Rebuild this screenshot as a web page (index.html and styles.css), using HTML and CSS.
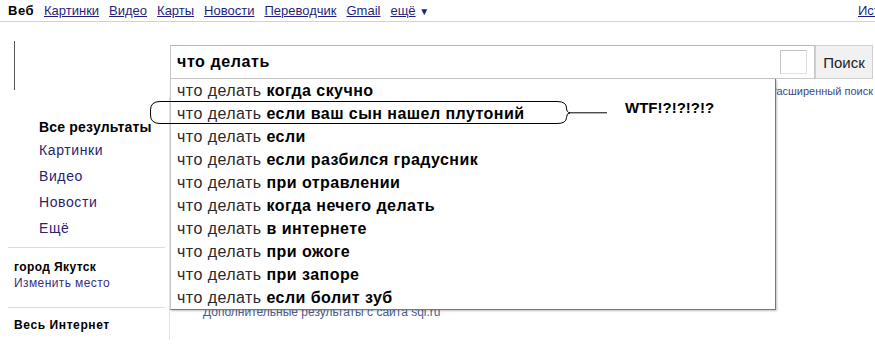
FILE: index.html
```html
<!DOCTYPE html>
<html lang="ru">
<head>
<meta charset="utf-8">
<title>что делать - Поиск</title>
<link rel="stylesheet" href="styles.css">
</head>
<body>
<div class="topbar">
  <nav class="nav-left">
    <b class="current">Веб</b>
    <a href="#">Картинки</a>
    <a href="#">Видео</a>
    <a href="#">Карты</a>
    <a href="#">Новости</a>
    <a href="#">Переводчик</a>
    <a href="#">Gmail</a>
    <span class="more"><a href="#">ещё</a> <span class="arrow">▼</span></span>
  </nav>
  <div class="nav-right"><a href="#">История поиска</a></div>
</div>

<div class="header">
  <div class="logo-line"></div>
  <div class="search">
    <div class="search-row">
      <div class="input"><span class="query">что делать</span><span class="ime"></span></div>
      <button class="btn">Поиск</button>
    </div>
    <div class="adv"><a href="#">Расширенный поиск</a></div>
    <ul class="dropdown">
      <li>что делать <b>когда скучно</b></li>
      <li>что делать <b>если ваш сын нашел плутоний</b></li>
      <li>что делать <b>если</b></li>
      <li>что делать <b>если разбился градусник</b></li>
      <li>что делать <b>при отравлении</b></li>
      <li>что делать <b>когда нечего делать</b></li>
      <li>что делать <b>в интернете</b></li>
      <li>что делать <b>при ожоге</b></li>
      <li>что делать <b>при запоре</b></li>
      <li>что делать <b>если болит зуб</b></li>
    </ul>
  </div>
</div>

<div class="main">
  <aside class="left">
    <div class="nav-title">Все результаты</div>
    <ul class="side-links">
      <li><a href="#">Картинки</a></li>
      <li><a href="#">Видео</a></li>
      <li><a href="#">Новости</a></li>
      <li><a href="#">Ещё</a></li>
    </ul>
    <div class="sep"></div>
    <div class="loc">
      <div class="loc-title">город Якутск</div>
      <a href="#" class="loc-link">Изменить место</a>
    </div>
    <div class="sep sep2"></div>
    <div class="loc-title web">Весь Интернет</div>
  </aside>
  <section class="results">
    <a href="#" class="more-res">Дополнительные результаты с сайта sql.ru</a>
  </section>
</div>

<svg class="annot" width="875" height="347" viewBox="0 0 875 347">
  <path d="M160 101.5 H557 Q566.5 101.5 566.5 108 Q566.5 112.5 570 112.8 Q566.5 113.2 566.5 117.5 Q566.5 123.5 557 123.5 H160 Q150.5 123.5 150.5 115 V110 Q150.5 101.5 160 101.5 Z" fill="none" stroke="#000" stroke-width="1"/>
  <line x1="569" y1="112.8" x2="607" y2="112.8" stroke="#000" stroke-width="1"/>
</svg>
<div class="wtf">WTF!?!?!?!?</div>
</body>
</html>
```

FILE: styles.css
```css
html, body {
  margin: 0;
  padding: 0;
  background: #fff;
  overflow: hidden;
}
body {
  font-family: "Liberation Sans", Arial, sans-serif;
  color: #000;
  width: 875px;
  height: 347px;
  position: relative;
}
a { color: #22227a; }

/* top bar */
.topbar {
  display: flex;
  height: 21px;
  line-height: 21px;
  font-size: 13px;
  border-bottom: 1px solid #cfd4dc;
  padding-left: 8px;
  white-space: nowrap;
}
.nav-left {
  display: flex;
  gap: 10px;
}
.nav-left a { color: #1f1f80; }
.current { font-weight: bold; letter-spacing: 0.5px; }
.arrow { font-size: 10px; color: #1f1f80; }
.nav-right {
  margin-left: auto;
  width: 17px;
  overflow: hidden;
}
.nav-right a { color: #1f1f80; }

/* header */
.header {
  display: flex;
  align-items: flex-start;
  padding-top: 19px;
}
.logo-line {
  margin-left: 14px;
  width: 1px;
  height: 49px;
  background: #555;
}
.search {
  position: relative;
  margin-left: 155px;
  margin-top: 4px;
  width: 703px;
}
.search-row {
  display: flex;
}
.input {
  box-sizing: border-box;
  width: 645px;
  height: 34px;
  border: 1px solid #c8c8c8;
  border-top-color: #b8b8b8;
  display: flex;
  align-items: center;
  padding-left: 6px;
}
.query {
  font-size: 16px;
  font-weight: bold;
  letter-spacing: 0.6px;
}
.ime {
  margin-left: auto;
  margin-right: 7px;
  width: 25px;
  height: 22px;
  border: 1px solid #c4c4c4;
  border-right-color: #e0e0e0;
  border-bottom-color: #e0e0e0;
}
.btn {
  box-sizing: border-box;
  width: 58px;
  height: 34px;
  border: 1px solid #cfcfcf;
  background: #f1f1f1;
  font-family: "Liberation Sans", Arial, sans-serif;
  font-size: 15px;
  color: #222;
  padding: 0;
}
.adv {
  text-align: right;
  font-size: 11px;
  line-height: 14px;
  margin-top: 5px;
}
.adv a { color: #3b4a86; text-decoration: none; }

.dropdown {
  position: absolute;
  top: 34px;
  left: 0;
  width: 604px;
  margin: 0;
  padding: 0;
  list-style: none;
  background: #fff;
  border: 1px solid #777;
  border-top: none;
  border-left-color: #c8c8c8;
  box-shadow: 1px 1px 2px rgba(0,0,0,0.25);
  z-index: 2;
}
.dropdown li {
  height: 23px;
  line-height: 23px;
  padding-left: 6px;
  font-size: 16px;
  letter-spacing: 0.45px;
  color: #2a2a2a;
  white-space: nowrap;
}
.dropdown b { color: #000; }

/* main */
.main {
  display: grid;
  grid-template-columns: 170px 1fr;
}
.left {
  box-sizing: border-box;
  border-right: 1px solid #e3e3e3;
  padding-top: 19px;
  height: 242px;
}
.nav-title {
  padding-left: 39px;
  font-size: 14px;
  font-weight: bold;
  line-height: 20px;
  letter-spacing: 0.2px;
}
.side-links {
  list-style: none;
  margin: 0;
  padding: 0 0 0 39px;
  font-size: 14px;
  line-height: 26px;
  letter-spacing: 0.6px;
}
.side-links a { color: #2a2270; text-decoration: none; }
.sep {
  margin: 6px 0 0 8px;
  width: 157px;
  border-top: 1px solid #dcdcdc;
}
.sep2 { margin-top: 16px; }
.loc {
  margin-top: 11px;
  padding-left: 14px;
  font-size: 12px;
  line-height: 16px;
}
.loc-title {
  font-size: 12px;
  font-weight: bold;
  line-height: 16px;
  letter-spacing: 0.4px;
}
.loc-link { color: #3a2f7a; text-decoration: none; letter-spacing: 0.4px; }
.web {
  padding-left: 14px;
  margin-top: 9px;
  letter-spacing: 0.6px;
}
.results {
  padding-left: 33px;
  padding-top: 204px;
}
.more-res {
  font-size: 12px;
  line-height: 14px;
  color: #4c5c8c;
  text-decoration: none;
}

/* annotation overlay */
.annot {
  position: absolute;
  left: 0;
  top: 0;
  pointer-events: none;
  z-index: 3;
}
.wtf {
  position: absolute;
  left: 625px;
  top: 99px;
  font-size: 15px;
  font-weight: bold;
  line-height: 17px;
  z-index: 3;
}
```
